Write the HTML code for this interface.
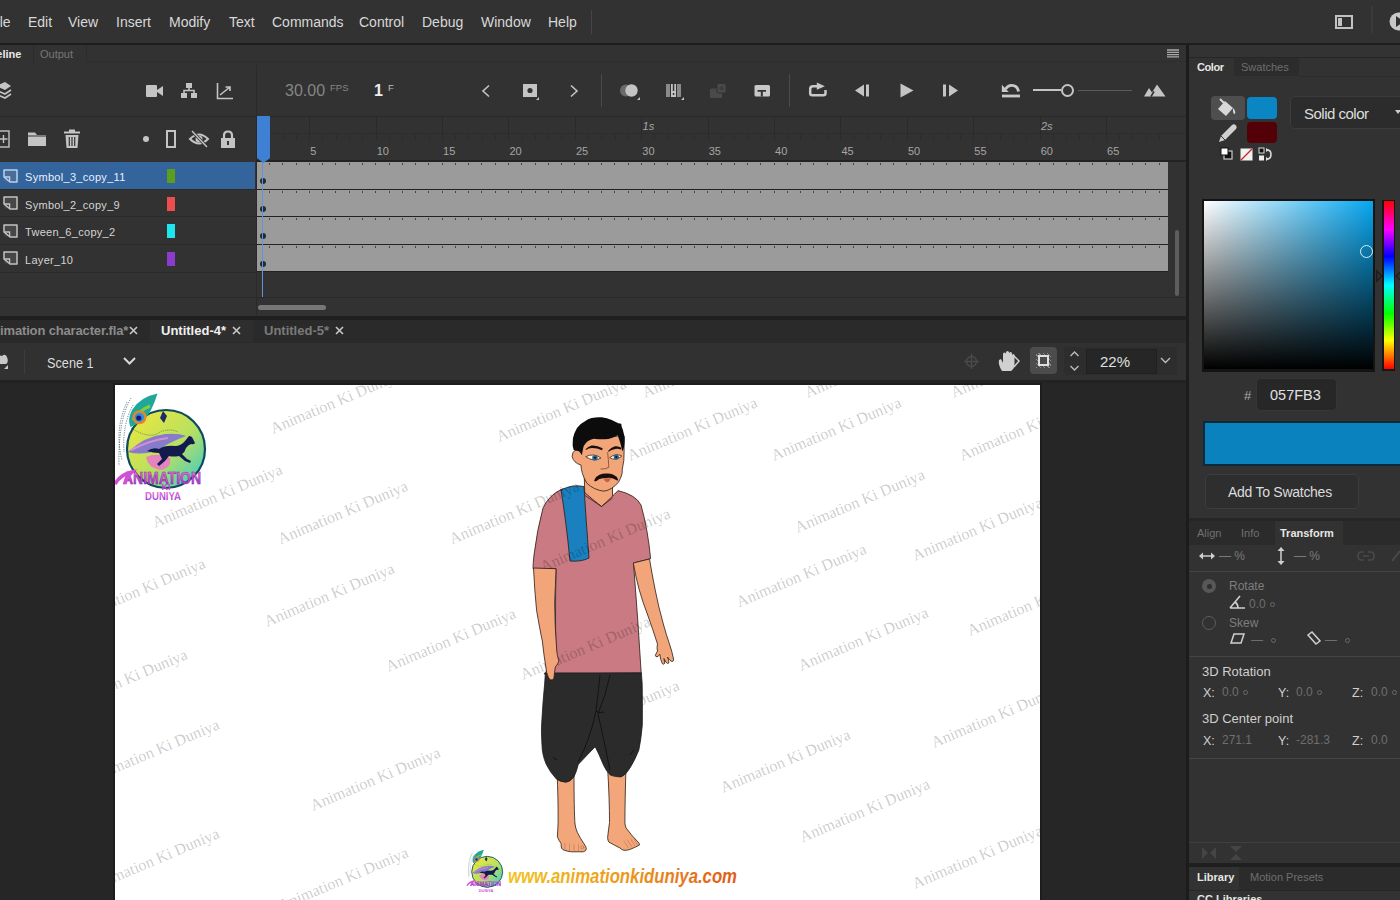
<!DOCTYPE html>
<html><head><meta charset="utf-8">
<style>
*{margin:0;padding:0;box-sizing:border-box}
html,body{width:1400px;height:900px;overflow:hidden;background:#262626;font-family:"Liberation Sans",sans-serif;position:relative}
.a{position:absolute}
.t{position:absolute;white-space:nowrap;line-height:1}
svg{position:absolute;overflow:visible}
#menu{left:0;top:0;width:1400px;height:43px;background:#323232}
#menu .t{top:15px;font-size:14px;color:#d8d8d8}
.ic{fill:#c4c4c4;stroke:none}
.ics{fill:none;stroke:#c4c4c4;stroke-width:1.6}
</style></head><body>
<!-- MENU -->
<div id="menu" class="a">
 <span class="t" style="left:-12px">File</span>
 <span class="t" style="left:28px">Edit</span>
 <span class="t" style="left:68px">View</span>
 <span class="t" style="left:116px">Insert</span>
 <span class="t" style="left:169px">Modify</span>
 <span class="t" style="left:229px">Text</span>
 <span class="t" style="left:272px">Commands</span>
 <span class="t" style="left:359px">Control</span>
 <span class="t" style="left:422px">Debug</span>
 <span class="t" style="left:481px">Window</span>
 <span class="t" style="left:548px">Help</span>
 <div class="a" style="left:591px;top:10px;width:1px;height:24px;background:#454545"></div>
 <div class="a" style="left:1335px;top:15px;width:18px;height:14px;border:2px solid #c2c2c2"></div>
 <div class="a" style="left:1338px;top:18px;width:3.5px;height:8px;background:#c2c2c2"></div>
 <div class="a" style="left:1370.5px;top:6px;width:2px;height:27px;background:#3a3a3a"></div>
 <svg style="left:1389px;top:12px" width="20" height="20" viewBox="0 0 20 20"><circle cx="9.5" cy="9.5" r="9" fill="#c8c8c8"/><path d="M7 4 L15 9.5 L7 15 Z" fill="#323232"/></svg>
</div>
<div class="a" style="left:0;top:43px;width:1400px;height:2px;background:#1e1e1e"></div>


<!-- TIMELINE PANEL -->
<div class="a" style="left:0;top:45px;width:1186px;height:272px;background:#323232"></div>
<span class="t" style="left:-23px;top:49px;font-size:11px;font-weight:bold;color:#e8e8e8">Timeline</span>
<div class="a" style="left:32.5px;top:45px;width:1px;height:18px;background:#2b2b2b"></div>
<span class="t" style="left:40px;top:49px;font-size:11px;color:#777777">Output</span>
<div class="a" style="left:86px;top:45px;width:1px;height:17px;background:#2c2c2c"></div>
<div class="a" style="left:86px;top:61px;width:1100px;height:1px;background:#2e2e2e"></div>

<!-- timeline toolbar -->
<svg style="left:0;top:80px" width="12" height="22" viewBox="0 0 12 22"><path class="ic" d="M-4 6 L5 2 L11 6 L5 10 Z"/><path class="ics" d="M-4 10 L5 14 L11 10 M-4 14 L5 18 L11 14" stroke-width="1.8"/></svg>
<svg style="left:145px;top:84px" width="20" height="14" viewBox="0 0 20 14"><rect class="ic" x="1" y="1" width="11" height="12" rx="1"/><path class="ic" d="M12 6 L18 2 L18 12 L12 8 Z"/></svg>
<svg style="left:180px;top:82px" width="18" height="17" viewBox="0 0 18 17"><rect class="ic" x="6" y="1" width="6" height="5"/><rect class="ic" x="1" y="11" width="6" height="5"/><rect class="ic" x="11" y="11" width="6" height="5"/><path class="ics" d="M9 6 V9 M4 11 V8.5 H14 V11" stroke-width="1.5"/></svg>
<svg style="left:216px;top:82px" width="18" height="18" viewBox="0 0 18 18"><path class="ics" d="M1.5 1 V16.5 H17" stroke-width="1.3"/><path class="ics" d="M4 13 L14 5 M9.5 5 H14 V9" stroke-width="1.5"/></svg>
<div class="a" style="left:256px;top:65px;width:1px;height:252px;background:#2a2a2a"></div>
<span class="t" style="left:285px;top:83px;font-size:16px;color:#858585">30.00</span>
<span class="t" style="left:330px;top:83px;font-size:9.5px;color:#858585">FPS</span>
<span class="t" style="left:374px;top:83px;font-size:16px;font-weight:bold;color:#eeeeee">1</span>
<span class="t" style="left:388px;top:83px;font-size:9.5px;color:#bdbdbd">F</span>
<svg style="left:480px;top:84px" width="12" height="14" viewBox="0 0 12 14"><path class="ics" d="M9 1.5 L3 7 L9 12.5" stroke-width="2"/></svg>
<svg style="left:522px;top:83px" width="18" height="17" viewBox="0 0 18 17"><rect class="ic" x="1" y="1" width="14" height="13"/><circle cx="8" cy="7.5" r="2.6" fill="#323232"/><path class="ic" d="M17 14 L17 17 L14 17 Z"/></svg>
<svg style="left:568px;top:84px" width="12" height="14" viewBox="0 0 12 14"><path class="ics" d="M3 1.5 L9 7 L3 12.5" stroke-width="2"/></svg>
<div class="a" style="left:601px;top:74px;width:1px;height:33px;background:#4a4a4a"></div>
<svg style="left:619px;top:83px" width="22" height="17" viewBox="0 0 22 17"><circle cx="7" cy="7.5" r="6" fill="#6a6a6a"/><circle cx="12.5" cy="7.5" r="6.2" fill="#c4c4c4"/><path class="ic" d="M21 14 L21 17 L18 17 Z"/></svg>
<svg style="left:665px;top:83px" width="20" height="17" viewBox="0 0 20 17"><rect x="1" y="1" width="4" height="13" fill="#8a8a8a"/><rect x="6" y="1" width="5" height="13" fill="#c4c4c4"/><rect x="12" y="1" width="4" height="13" fill="#8a8a8a"/><rect x="7.8" y="10" width="1.5" height="2" fill="#323232"/><rect x="7.8" y="1" width="1.5" height="7" fill="#323232"/><path class="ic" d="M19 14 L19 17 L16 17 Z"/></svg>
<svg style="left:709px;top:83px" width="20" height="17" viewBox="0 0 20 17"><rect x="1" y="5.5" width="12" height="9.5" rx="1.5" fill="#4a4a4a"/><rect x="8" y="0.5" width="9" height="9.5" rx="1.5" fill="#4a4a4a" stroke="#323232" stroke-width="1"/><circle cx="12.5" cy="5.2" r="2" fill="#3c3c3c"/></svg>
<svg style="left:754px;top:85px" width="17" height="12" viewBox="0 0 17 12"><rect x="0.5" y="0" width="15.5" height="11.5" rx="1.5" fill="#c8c8c8"/><path d="M3.5 5 H12 V6.8 H8.8 V11.5 H6.8 V6.8 H3.5 Z" fill="#323232"/></svg>
<div class="a" style="left:789px;top:74px;width:1px;height:33px;background:#4a4a4a"></div>
<svg style="left:800px;top:75px" width="30" height="25" viewBox="800 75 30 25"><path d="M818 86.2 H813 Q810.2 86.2 810.2 89 V93.3 Q810.2 95.3 812.2 95.3 H823.5 Q825.5 95.3 825.5 93.3 V90" fill="none" stroke="#c8c8c8" stroke-width="2.5"/><path d="M816.8 82.6 L824.9 86.2 L816.8 89.8 Z" fill="#c8c8c8"/></svg>
<svg style="left:854px;top:84px" width="18" height="13" viewBox="0 0 18 13"><path class="ic" d="M10 0.5 L1 6.5 L10 12.5 Z"/><rect class="ic" x="12" y="0.5" width="3" height="12"/></svg>
<svg style="left:899px;top:83px" width="16" height="15" viewBox="0 0 16 15"><path class="ic" d="M1.5 0.5 L14.5 7.5 L1.5 14.5 Z"/></svg>
<svg style="left:942px;top:84px" width="18" height="13" viewBox="0 0 18 13"><rect class="ic" x="1" y="0.5" width="3" height="12"/><path class="ic" d="M7 0.5 L16 6.5 L7 12.5 Z"/></svg>
<svg style="left:995px;top:75px" width="30" height="25" viewBox="995 75 30 25"><path d="M1005.5 89 Q1008 85.3 1011.5 85.3 Q1017.5 85.3 1018.5 91.5" fill="none" stroke="#c8c8c8" stroke-width="2.8"/><path d="M1001.8 84.8 L1001.8 92 L1008.8 92 Z" fill="#c8c8c8"/><rect x="1002" y="94.6" width="18" height="2.8" fill="#c8c8c8"/></svg>
<div class="a" style="left:1033px;top:89px;width:28px;height:2px;background:#c4c4c4"></div>
<svg style="left:1060px;top:83px" width="15" height="15" viewBox="0 0 15 15"><circle cx="7.5" cy="7.5" r="5.5" fill="none" stroke="#c4c4c4" stroke-width="2"/></svg>
<div class="a" style="left:1078px;top:89.5px;width:54px;height:1px;background:#5a5a5a"></div>
<svg style="left:1143px;top:84px" width="24" height="13" viewBox="0 0 24 13"><path class="ic" d="M1 12.5 L6 4 L9 8.5 L14 0.5 L22.5 12.5 Z"/><path d="M8 12.5 L11 7.5" stroke="#323232" stroke-width="1.6"/></svg>
<svg style="left:1167px;top:49px" width="13" height="10" viewBox="0 0 13 10"><path d="M0 1 H12 M0 3.3 H12 M0 5.6 H12 M0 7.9 H12" stroke="#aaaaaa" stroke-width="1.3"/></svg>

<div class="a" style="left:0;top:116px;width:1186px;height:1px;background:#282828"></div>
<!-- layer header icons -->
<svg style="left:-3px;top:130px" width="14" height="18" viewBox="0 0 14 18"><rect x="1" y="1" width="11" height="16" fill="none" stroke="#c4c4c4" stroke-width="1.4"/><path d="M6.5 5 V13 M2.5 9 H10.5" stroke="#c4c4c4" stroke-width="1.4"/></svg>
<svg style="left:27px;top:131px" width="20" height="16" viewBox="0 0 20 16"><path class="ic" d="M1 1.5 H8 L10 4 H19 V15 H1 Z"/><path d="M1 5 H19" stroke="#323232" stroke-width="1"/></svg>
<svg style="left:63px;top:129px" width="18" height="20" viewBox="0 0 18 20"><path class="ic" d="M6 0.5 H12 V2.5 H17 V4.5 H1 V2.5 H6 Z"/><path class="ic" d="M2.5 6 H15.5 L14.5 19 H3.5 Z"/><path d="M6.3 8 V17 M9 8 V17 M11.7 8 V17" stroke="#323232" stroke-width="1.2"/></svg>
<div class="a" style="left:143px;top:136px;width:6px;height:6px;border-radius:3px;background:#c4c4c4"></div>
<div class="a" style="left:166px;top:130px;width:10px;height:18px;border:2px solid #c4c4c4"></div>
<svg style="left:189px;top:129px" width="20" height="20" viewBox="0 0 20 20"><path d="M1 10 Q10 1 19 10 Q10 19 1 10 Z" fill="none" stroke="#c4c4c4" stroke-width="2"/><circle cx="10" cy="10" r="3.5" fill="#c4c4c4"/><path d="M3 2 L18 18" stroke="#323232" stroke-width="3"/><path d="M3 2 L18 18" stroke="#c4c4c4" stroke-width="1.4"/></svg>
<svg style="left:220px;top:130px" width="16" height="18" viewBox="0 0 16 18"><path d="M4 8 V5.5 Q4 1.5 8 1.5 Q12 1.5 12 5.5 V8" fill="none" stroke="#c4c4c4" stroke-width="2.2"/><rect class="ic" x="1" y="8" width="14" height="10"/><rect x="7" y="11" width="2" height="4" fill="#323232"/></svg>

<!-- ruler -->
<div class="a" style="left:256px;top:133px;width:930px;height:1px;background:#2c2c2c"></div>
<div class="a" style="left:256px;top:160px;width:930px;height:2px;background:#232323"></div>

<span class="t" style="left:310.3px;top:146px;font-size:11px;color:#a6a6a6">5</span>
<div class="a" style="left:309.1px;top:117px;width:1px;height:24px;background:#2a2a2a"></div>
<span class="t" style="left:376.7px;top:146px;font-size:11px;color:#a6a6a6">10</span>
<div class="a" style="left:375.5px;top:117px;width:1px;height:24px;background:#2a2a2a"></div>
<span class="t" style="left:443.1px;top:146px;font-size:11px;color:#a6a6a6">15</span>
<div class="a" style="left:441.9px;top:117px;width:1px;height:24px;background:#2a2a2a"></div>
<span class="t" style="left:509.5px;top:146px;font-size:11px;color:#a6a6a6">20</span>
<div class="a" style="left:508.3px;top:117px;width:1px;height:24px;background:#2a2a2a"></div>
<span class="t" style="left:575.9px;top:146px;font-size:11px;color:#a6a6a6">25</span>
<div class="a" style="left:574.7px;top:117px;width:1px;height:24px;background:#2a2a2a"></div>
<span class="t" style="left:642.3px;top:146px;font-size:11px;color:#a6a6a6">30</span>
<div class="a" style="left:641.1px;top:117px;width:1px;height:24px;background:#2a2a2a"></div>
<span class="t" style="left:708.7px;top:146px;font-size:11px;color:#a6a6a6">35</span>
<div class="a" style="left:707.5px;top:117px;width:1px;height:24px;background:#2a2a2a"></div>
<span class="t" style="left:775.1px;top:146px;font-size:11px;color:#a6a6a6">40</span>
<div class="a" style="left:773.9px;top:117px;width:1px;height:24px;background:#2a2a2a"></div>
<span class="t" style="left:841.5px;top:146px;font-size:11px;color:#a6a6a6">45</span>
<div class="a" style="left:840.3px;top:117px;width:1px;height:24px;background:#2a2a2a"></div>
<span class="t" style="left:907.9px;top:146px;font-size:11px;color:#a6a6a6">50</span>
<div class="a" style="left:906.7px;top:117px;width:1px;height:24px;background:#2a2a2a"></div>
<span class="t" style="left:974.3px;top:146px;font-size:11px;color:#a6a6a6">55</span>
<div class="a" style="left:973.1px;top:117px;width:1px;height:24px;background:#2a2a2a"></div>
<span class="t" style="left:1040.7px;top:146px;font-size:11px;color:#a6a6a6">60</span>
<div class="a" style="left:1039.5px;top:117px;width:1px;height:24px;background:#2a2a2a"></div>
<span class="t" style="left:1107.1px;top:146px;font-size:11px;color:#a6a6a6">65</span>
<div class="a" style="left:1105.9px;top:117px;width:1px;height:24px;background:#2a2a2a"></div>
<span class="t" style="left:642.6px;top:121px;font-size:11px;font-style:italic;color:#a6a6a6">1s</span>
<span class="t" style="left:1041.0px;top:121px;font-size:11px;font-style:italic;color:#a6a6a6">2s</span>
<div class="a" style="left:256px;top:134px;width:912px;height:6px;background-image:repeating-linear-gradient(90deg,#2c2c2c 0 1px,transparent 1px 13.28px);background-position:0 0"></div>
<div class="a" style="left:0;top:162.0px;width:255px;height:26.5px;background:#33649c"></div>
<svg style="left:3px;top:168.5px" width="15" height="14" viewBox="0 0 15 14"><rect x="1.5" y="1.5" width="12" height="11" fill="#4c6e96"/><path d="M1 8 V1 H14 V13 H7 Z" fill="none" stroke="#b8d4f0" stroke-width="1.5" stroke-linejoin="round"/><path d="M1.5 8 H6.6 V12.6" fill="none" stroke="#b8d4f0" stroke-width="1.3"/></svg>
<span class="t" style="left:25px;top:172.0px;font-size:11px;letter-spacing:0.3px;color:#e8f0fa">Symbol_3_copy_11</span>
<div class="a" style="left:167px;top:169.0px;width:8px;height:14px;background:#5e9c1c"></div>
<div class="a" style="left:257px;top:162.0px;width:911px;height:26.5px;background:#9b9b9b;background-image:repeating-linear-gradient(90deg,#444 0 1px,transparent 1px 13.28px);background-size:100% 2px;background-repeat:no-repeat;background-position:12px 1px"></div>
<div class="a" style="left:257px;top:188.5px;width:911px;height:1px;background:#222"></div>
<div class="a" style="left:259.5px;top:178.0px;width:6px;height:6px;border-radius:3px;background:#1d2b3a"></div>
<svg style="left:3px;top:196.0px" width="15" height="14" viewBox="0 0 15 14"><rect x="1.5" y="1.5" width="12" height="11" fill="#474747"/><path d="M1 8 V1 H14 V13 H7 Z" fill="none" stroke="#c4c4c4" stroke-width="1.5" stroke-linejoin="round"/><path d="M1.5 8 H6.6 V12.6" fill="none" stroke="#c4c4c4" stroke-width="1.3"/></svg>
<span class="t" style="left:25px;top:199.5px;font-size:11px;letter-spacing:0.3px;color:#d4d4d4">Symbol_2_copy_9</span>
<div class="a" style="left:167px;top:196.5px;width:8px;height:14px;background:#ec4d4d"></div>
<div class="a" style="left:0;top:188.5px;width:256px;height:1px;background:#2a2a2a"></div>
<div class="a" style="left:257px;top:189.5px;width:911px;height:26.5px;background:#9b9b9b;background-image:repeating-linear-gradient(90deg,#444 0 1px,transparent 1px 13.28px);background-size:100% 2px;background-repeat:no-repeat;background-position:12px 1px"></div>
<div class="a" style="left:257px;top:216.0px;width:911px;height:1px;background:#222"></div>
<div class="a" style="left:259.5px;top:205.5px;width:6px;height:6px;border-radius:3px;background:#1d2b3a"></div>
<svg style="left:3px;top:223.5px" width="15" height="14" viewBox="0 0 15 14"><rect x="1.5" y="1.5" width="12" height="11" fill="#474747"/><path d="M1 8 V1 H14 V13 H7 Z" fill="none" stroke="#c4c4c4" stroke-width="1.5" stroke-linejoin="round"/><path d="M1.5 8 H6.6 V12.6" fill="none" stroke="#c4c4c4" stroke-width="1.3"/></svg>
<span class="t" style="left:25px;top:227.0px;font-size:11px;letter-spacing:0.3px;color:#d4d4d4">Tween_6_copy_2</span>
<div class="a" style="left:167px;top:224.0px;width:8px;height:14px;background:#1ee6ee"></div>
<div class="a" style="left:0;top:216.0px;width:256px;height:1px;background:#2a2a2a"></div>
<div class="a" style="left:257px;top:217.0px;width:911px;height:26.5px;background:#9b9b9b;background-image:repeating-linear-gradient(90deg,#444 0 1px,transparent 1px 13.28px);background-size:100% 2px;background-repeat:no-repeat;background-position:12px 1px"></div>
<div class="a" style="left:257px;top:243.5px;width:911px;height:1px;background:#222"></div>
<div class="a" style="left:259.5px;top:233.0px;width:6px;height:6px;border-radius:3px;background:#1d2b3a"></div>
<svg style="left:3px;top:251.0px" width="15" height="14" viewBox="0 0 15 14"><rect x="1.5" y="1.5" width="12" height="11" fill="#474747"/><path d="M1 8 V1 H14 V13 H7 Z" fill="none" stroke="#c4c4c4" stroke-width="1.5" stroke-linejoin="round"/><path d="M1.5 8 H6.6 V12.6" fill="none" stroke="#c4c4c4" stroke-width="1.3"/></svg>
<span class="t" style="left:25px;top:254.5px;font-size:11px;letter-spacing:0.3px;color:#d4d4d4">Layer_10</span>
<div class="a" style="left:167px;top:251.5px;width:8px;height:14px;background:#8c3ccc"></div>
<div class="a" style="left:0;top:243.5px;width:256px;height:1px;background:#2a2a2a"></div>
<div class="a" style="left:257px;top:244.5px;width:911px;height:27.5px;background:#9b9b9b;background-image:repeating-linear-gradient(90deg,#444 0 1px,transparent 1px 13.28px);background-size:100% 2px;background-repeat:no-repeat;background-position:12px 1px"></div>
<div class="a" style="left:257px;top:271.0px;width:911px;height:1px;background:#222"></div>
<div class="a" style="left:259.5px;top:260.5px;width:6px;height:6px;border-radius:3px;background:#1d2b3a"></div>
<div class="a" style="left:0;top:272px;width:256px;height:1px;background:#2a2a2a"></div>
<div class="a" style="left:0;top:297px;width:1186px;height:1px;background:#2a2a2a"></div>
<!-- playhead -->
<div class="a" style="left:261.8px;top:158px;width:1.6px;height:139px;background:#5f95d6"></div>
<svg style="left:257px;top:116px" width="13" height="47" viewBox="0 0 13 47"><path d="M0 0 H13 V42 L6.5 47 L0 42 Z" fill="#3d80d4"/></svg>
<!-- scrollbars -->
<div class="a" style="left:258px;top:305px;width:68px;height:4.5px;border-radius:2.5px;background:#777777"></div>
<div class="a" style="left:1175px;top:230px;width:4px;height:66px;border-radius:2px;background:#5e5e5e"></div>
<!-- panel bottom -->
<div class="a" style="left:0;top:316px;width:1186px;height:4px;background:#1f1f1f"></div>

<!-- DOC TABS -->
<div class="a" style="left:0;top:320px;width:1186px;height:22px;background:#2a2a2a"></div>
<div class="a" style="left:150px;top:320px;width:103px;height:22px;background:#2e2e2e"></div>
<span class="t" style="left:-17px;top:324px;font-size:13px;font-weight:bold;color:#8c8c8c;letter-spacing:-0.15px">Animation character.fla*</span>
<svg style="left:129px;top:326px" width="9" height="9" viewBox="0 0 9 9"><path d="M1 1 L8 8 M8 1 L1 8" stroke="#c8c8c8" stroke-width="1.6"/></svg>
<span class="t" style="left:161px;top:324px;font-size:13px;font-weight:bold;color:#f0f0f0">Untitled-4*</span>
<svg style="left:232px;top:326px" width="9" height="9" viewBox="0 0 9 9"><path d="M1 1 L8 8 M8 1 L1 8" stroke="#c8c8c8" stroke-width="1.6"/></svg>
<span class="t" style="left:264px;top:324px;font-size:13px;font-weight:bold;color:#7a7a7a">Untitled-5*</span>
<svg style="left:335px;top:326px" width="9" height="9" viewBox="0 0 9 9"><path d="M1 1 L8 8 M8 1 L1 8" stroke="#c8c8c8" stroke-width="1.6"/></svg>
<!-- SCENE BAR -->
<div class="a" style="left:0;top:342px;width:1186px;height:38px;background:#313131"></div>
<div class="a" style="left:0;top:342px;width:1186px;height:1px;background:#2a2a2a"></div>
<svg style="left:-4px;top:352px" width="14" height="18" viewBox="0 0 14 18"><path d="M0 8 Q2 2 6 4 Q9 1 11 5 Q13 10 10 12 H0 Z" fill="#c8c8c8"/><path d="M8 17 L12 13 V17 Z" fill="#c8c8c8"/></svg>
<div class="a" style="left:24px;top:350px;width:1px;height:24px;background:#3c3c3c"></div>
<span class="t" style="left:47px;top:355px;font-size:15.5px;color:#dcdcdc;transform:scaleX(0.82);transform-origin:0 0">Scene 1</span>
<svg style="left:123px;top:357px" width="13" height="8" viewBox="0 0 13 8"><path d="M1 1 L6.5 6.5 L12 1" fill="none" stroke="#d8d8d8" stroke-width="2"/></svg>
<svg style="left:963px;top:353px" width="17" height="17" viewBox="0 0 17 17"><circle cx="8.5" cy="8.5" r="5" fill="none" stroke="#4a4a4a" stroke-width="1.5"/><path d="M8.5 1 V16 M1 8.5 H16" stroke="#4a4a4a" stroke-width="1.5"/></svg>
<svg style="left:997px;top:350px" width="23" height="22" viewBox="0 0 23 22"><path d="M5 21 Q1 15 2 10 L4 9 L6 13 V4 Q6 2.5 7.5 2.5 Q9 2.5 9 4 V9 V2.5 Q9 1 10.5 1 Q12 1 12 2.5 V9 V3.5 Q12 2 13.5 2 Q15 2 15 3.5 V9 V5.5 Q15 4 16.3 4 Q17.5 4 17.5 5.5 V14 Q17.5 19 14 21 Z" fill="#d0d0d0"/><path d="M16 5 L22 11 L17 17" fill="none" stroke="#d0d0d0" stroke-width="1.5"/></svg>
<div class="a" style="left:1030px;top:347px;width:27px;height:27px;border-radius:4px;background:#4c4c4c"></div>
<div class="a" style="left:1036px;top:353px;width:15px;height:15px;background:repeating-linear-gradient(45deg,#8a8a8a 0 1px,#4c4c4c 1px 3px)"></div>
<div class="a" style="left:1038px;top:355px;width:11px;height:11px;border:2px solid #e0e0e0;background:#4c4c4c"></div>
<div class="a" style="left:1064px;top:347px;width:113px;height:28px;border-radius:4px;background:#2d2d2d"></div>
<svg style="left:1069px;top:350px" width="11" height="22" viewBox="0 0 11 22"><path d="M1.5 6 L5.5 2 L9.5 6 M1.5 16 L5.5 20 L9.5 16" fill="none" stroke="#bdbdbd" stroke-width="1.4"/></svg>
<div class="a" style="left:1086px;top:349px;width:71px;height:25px;background:#262626;border:1px solid #202020"></div>
<span class="t" style="left:1100px;top:354px;font-size:15px;color:#e0e0e0">22%</span>
<svg style="left:1160px;top:357px" width="11" height="7" viewBox="0 0 11 7"><path d="M1 1 L5.5 5.5 L10 1" fill="none" stroke="#bdbdbd" stroke-width="1.4"/></svg>
<!-- STAGE AREA -->
<div class="a" style="left:0;top:380px;width:1186px;height:520px;background:#262626"></div>
<div class="a" style="left:0;top:380px;width:1186px;height:3px;background:#222222"></div>
<div class="a" style="left:113px;top:383px;width:929px;height:517px;background:#1c1c1c"></div>
<div id="stage" class="a" style="left:115px;top:385px;width:925px;height:515px;background:#ffffff;overflow:hidden"></div>

<svg style="left:115px;top:385px;overflow:hidden" width="925" height="515" viewBox="115 385 925 515">
<defs>
<linearGradient id="lg1" x1="0" y1="0" x2="1" y2="1"><stop offset="0" stop-color="#f4e83a"/><stop offset="0.55" stop-color="#b8e060"/><stop offset="1" stop-color="#2ec8d8"/></linearGradient>
<linearGradient id="lgt" x1="0" y1="0" x2="0" y2="1"><stop offset="0" stop-color="#f08ac8"/><stop offset="1" stop-color="#a030e0"/></linearGradient>
<linearGradient id="lgu" x1="0" y1="0" x2="1" y2="0"><stop offset="0" stop-color="#f2c41e"/><stop offset="0.5" stop-color="#eb9a1c"/><stop offset="1" stop-color="#e05a1a"/></linearGradient>
</defs>
<!-- character -->
<g stroke="#2a1a14" stroke-width="0.8" stroke-linejoin="round" stroke-linecap="round">
 <path d="M557 770 Q558.3 800 558.1 822.5 Q557.8 830 557.4 836.8 Q559 841 561.1 843.5 Q561 846 561.5 848 Q562.5 850 564.5 850.3 Q568 851.5 571.3 851.8 L583.3 851.8 Q586.5 851 586.3 848.8 Q586 846.5 584.8 845 Q580 838 577.3 832.3 Q575.5 828 575 824 Q574 812 574 770 Z" fill="#f3a67a"/><path d="M565 843 V849.5 M569.5 844 V851 M574 844.5 V851.2 M578.5 844.5 V851" stroke="#b06a48" stroke-width="0.5" fill="none"/><circle cx="582.3" cy="847.3" r="1.5" fill="none" stroke="#b06a48" stroke-width="0.5"/>
 <path d="M607.5 766 Q609.6 800 609.5 822.5 Q608.5 830 607.6 837.5 Q607.8 840.5 608.8 842 Q614 845 620 848 Q622 850 623.8 850.3 Q627 850.5 629.8 849.5 Q635 847.5 639.5 845 Q639.5 843 638 842 Q631 835 626 827.8 Q625 825 624.9 822.5 Q625 800 626 766 Z" fill="#f3a67a"/><path d="M624 841 L628.5 848 M627.5 840 L632 847 M631 839.5 L635 846 M634 839 L637.5 845" stroke="#b06a48" stroke-width="0.5" fill="none"/>
   <path d="M584.3 478 L585 500 L601.5 508 L612.5 501.6 L612.5 486 Z" fill="#f3a57a"/>
 <path d="M562 489 Q549 495 543 508 Q537 530 534 555 Q533 563 533 568.7 L556 568.7 Q555 620 556 660 L544 674 L641.2 673 Q638 620 633.5 563 Q642 561 650.6 558.6 Q648 530 641 505 Q636 495 618 490.6 Q612 497 601.5 506.5 Q592 499 584 492 Z" fill="#c97a82"/>
 <path d="M561 490 Q572 484 584 486.5 Q586 520 589 558 Q581 562 570 561 Q566 520 561 490 Z" fill="#1a80bf"/>
 <path d="M581.3 451 Q573 447 572.1 456.3 Q573.5 463 581 465 Q581 473 586.8 483.2 Q594 490 603.9 491.2 Q612 490 618.6 482 Q623 474 622.2 469.8 Q624.5 460 624.1 452 L624 436 L582 437 Z" fill="#f3a57a"/>
</g>
<path d="M573.7 450 Q572.2 446 572.7 443.3 Q572.8 440 573 438 Q574.5 432 577 428 Q580.5 423.5 585 421.3 Q588 419 591.7 418 Q596.5 417 601.7 417.3 Q607 418 611.7 420 Q615.5 421.8 618.3 423.3 Q620.5 423.5 621.3 424 L621.7 426.7 Q623 429.5 623.7 433.3 Q624.8 436.5 624.7 440 Q624.6 444 624 447.3 Q623.4 449.8 622.3 451.3 Q620.8 443 617.7 435.3 Q615 437 611.7 438 Q608 439.2 605 439.3 Q599 439.4 593.7 438.7 Q590.5 439.6 587.7 441.3 Q585.3 443.3 583.7 446 Q582.5 450.5 582 455.3 Q580.5 453 579 451.3 Q576.3 450.3 573.7 450 Z" fill="#0c0c0c"/>
<g fill="#1a0e0a">
 <path d="M585.5 449.2 Q588 446.6 591.7 445.6 Q597 445.2 602.6 448.2 L602.2 450.2 Q597 448.2 592 448.1 Q588.5 448.3 586 450 Z"/>
 <path d="M608 451 Q611 447.6 615 446.3 Q618.5 445.8 621.3 447.8 L621 449.6 Q618 448.5 615.2 449 Q611.5 449.8 608.6 451.8 Z"/>
 <path d="M594.2 480.2 Q595.5 476.5 599.5 474.8 Q603 473.4 606.3 473.6 Q609.8 473.3 613 474.6 Q616.8 476.2 618 479.4 Q618.4 481 616.6 480.2 Q613 477.9 609.5 477.8 Q606 478 603 478.2 Q599 478.4 596.5 481 Q594 481.8 594.2 480.2 Z"/>
</g>
<path d="M585.7 456.7 Q593.7 452.6 601 458 Q594 462.4 585.7 456.7 Z" fill="#fff" stroke="#5a3424" stroke-width="0.9"/>
<circle cx="595" cy="457.8" r="2.8" fill="#2a6a90"/>
<circle cx="595" cy="457.8" r="1.1" fill="#0a1a2a"/>
<path d="M609.7 457.7 Q615.7 452.6 621.7 456 Q616 461.5 609.7 457.7 Z" fill="#fff" stroke="#5a3424" stroke-width="0.9"/>
<circle cx="616.3" cy="457.1" r="2.7" fill="#2a6a90"/>
<circle cx="616.3" cy="457.1" r="1.1" fill="#0a1a2a"/>
<path d="M603.3 478.6 Q607.5 477.8 611.2 478.6 Q609 482.5 607 482.3 Q604.5 481.8 603.3 478.6 Z" fill="#c8604e"/>
<path d="M607.6 452 Q608.5 460 608.8 467.3 Q605 469.5 600.5 469" fill="none" stroke="#6a3a22" stroke-width="0.7"/>
<path d="M585 495.5 L601.5 506.5 L612.5 498" fill="none" stroke="#2a1a14" stroke-width="0.7"/>
<!-- logo top-left -->
<g>
 <circle cx="166" cy="449" r="39" fill="url(#lg1)" stroke="#0d4a5e" stroke-width="2.2"/>
 <g fill="none" stroke="#2a4a5a" stroke-width="0.7" stroke-dasharray="1.2 1.2">
  <path d="M131 398 Q118 420 119 466"/><path d="M127 402 Q114 430 122 460"/><path d="M133 405 Q122 425 124 452"/>
 </g>
 <path d="M157.5 393.5 Q140 397 132 410 Q127 420 130.5 427 Q145 422 151 410 Q155 402 157.5 393.5 Z" fill="#1fa89a"/>
 <path d="M150 406 Q140 410 133 420" stroke="#7ad040" stroke-width="3" fill="none"/>
 <circle cx="139.5" cy="417.3" r="7" fill="#e8862a"/>
 <circle cx="139.5" cy="417.3" r="4.6" fill="#2f8ee0"/>
 <circle cx="138.8" cy="418" r="2.6" fill="#101c7a"/>
 <path d="M131 428 Q150 440 160 432 Q170 428 178 432" fill="none" stroke="#2a4a5a" stroke-width="0.6" stroke-dasharray="1 1"/>
 <path d="M163 411 L167 416 L164 423 L160 418 Z" fill="#1a2a6a"/>
 <path d="M128 452 Q145 436 165 434 Q178 433 186 436 Q170 442 158 450 Q142 456 128 452 Z" fill="#7a6ae0" opacity="0.85"/>
 <path d="M131 450 Q150 440 168 438" stroke="#e090d0" stroke-width="2" fill="none" opacity="0.9"/>
 <path d="M146 457 Q158 452 170 458 Q172 468 160 470 Q148 468 146 457 Z" fill="#e87ac8" opacity="0.9"/>
 <path transform="translate(145 433)" d="M2 18 Q8 14 14 16 Q20 12 30 13 Q36 13 40 8 L44 3 Q47 3 48 6 L50 10 Q49 12 46 11 Q43 12 41 15 Q40 19 37 21 L42 26 L46 28 L45 30 L40 28 L34 23 Q28 24 24 23 L20 28 L14 33 L12 31 L17 26 Q15 22 14 20 Q8 20 2 18 Z" fill="#141a4e"/>
 <text x="162" y="483.5" font-family="Liberation Sans" font-weight="bold" font-size="16" text-anchor="middle" fill="url(#lgt)" stroke="#7a1aa0" stroke-width="0.5" textLength="78" lengthAdjust="spacingAndGlyphs">ANIMATION</text>
 <path d="M115 484 Q121 474 132 472 Q126 478 125 484" fill="none" stroke="#d050d8" stroke-width="3.5"/>
 <text x="166" y="490" font-family="Liberation Sans" font-weight="bold" font-size="9" text-anchor="middle" fill="#c040d0">KI</text>
 <text x="163" y="499.5" font-family="Liberation Sans" font-weight="bold" font-size="10.5" text-anchor="middle" fill="url(#lgt)" textLength="36" lengthAdjust="spacingAndGlyphs">DUNIYA</text>
</g>
<!-- bottom logo + url -->
<g>
<g transform="translate(421.3 693.6) scale(0.397)"><g>
 <circle cx="166" cy="449" r="39" fill="url(#lg1)" stroke="#0d4a5e" stroke-width="2.2"/>
 <g fill="none" stroke="#2a4a5a" stroke-width="0.7" stroke-dasharray="1.2 1.2">
  <path d="M131 398 Q118 420 119 466"/><path d="M127 402 Q114 430 122 460"/><path d="M133 405 Q122 425 124 452"/>
 </g>
 <path d="M157.5 393.5 Q140 397 132 410 Q127 420 130.5 427 Q145 422 151 410 Q155 402 157.5 393.5 Z" fill="#1fa89a"/>
 <path d="M150 406 Q140 410 133 420" stroke="#7ad040" stroke-width="3" fill="none"/>
 <circle cx="139.5" cy="417.3" r="7" fill="#e8862a"/>
 <circle cx="139.5" cy="417.3" r="4.6" fill="#2f8ee0"/>
 <circle cx="138.8" cy="418" r="2.6" fill="#101c7a"/>
 <path d="M131 428 Q150 440 160 432 Q170 428 178 432" fill="none" stroke="#2a4a5a" stroke-width="0.6" stroke-dasharray="1 1"/>
 <path d="M163 411 L167 416 L164 423 L160 418 Z" fill="#1a2a6a"/>
 <path d="M128 452 Q145 436 165 434 Q178 433 186 436 Q170 442 158 450 Q142 456 128 452 Z" fill="#7a6ae0" opacity="0.85"/>
 <path d="M131 450 Q150 440 168 438" stroke="#e090d0" stroke-width="2" fill="none" opacity="0.9"/>
 <path d="M146 457 Q158 452 170 458 Q172 468 160 470 Q148 468 146 457 Z" fill="#e87ac8" opacity="0.9"/>
 <path transform="translate(145 433)" d="M2 18 Q8 14 14 16 Q20 12 30 13 Q36 13 40 8 L44 3 Q47 3 48 6 L50 10 Q49 12 46 11 Q43 12 41 15 Q40 19 37 21 L42 26 L46 28 L45 30 L40 28 L34 23 Q28 24 24 23 L20 28 L14 33 L12 31 L17 26 Q15 22 14 20 Q8 20 2 18 Z" fill="#141a4e"/>
 <text x="162" y="483.5" font-family="Liberation Sans" font-weight="bold" font-size="16" text-anchor="middle" fill="url(#lgt)" stroke="#7a1aa0" stroke-width="0.5" textLength="78" lengthAdjust="spacingAndGlyphs">ANIMATION</text>
 <path d="M115 484 Q121 474 132 472 Q126 478 125 484" fill="none" stroke="#d050d8" stroke-width="3.5"/>
 <text x="166" y="490" font-family="Liberation Sans" font-weight="bold" font-size="9" text-anchor="middle" fill="#c040d0">KI</text>
 <text x="163" y="499.5" font-family="Liberation Sans" font-weight="bold" font-size="10.5" text-anchor="middle" fill="url(#lgt)" textLength="36" lengthAdjust="spacingAndGlyphs">DUNIYA</text>
</g></g>
 <text x="508" y="882.5" font-family="Liberation Sans" font-weight="bold" font-style="italic" font-size="20.5" fill="url(#lgu)" textLength="229" lengthAdjust="spacingAndGlyphs">www.animationkiduniya.com</text>
</g>
<!-- watermarks -->
<g font-family="Liberation Serif" font-size="16" fill="#000" fill-opacity="0.21">
<text x="273" y="434" transform="rotate(-23 273 434)">Animation Ki Duniya</text>
<text x="499" y="442" transform="rotate(-23 499 442)">Animation Ki Duniya</text>
<text x="630" y="461" transform="rotate(-23 630 461)">Animation Ki Duniya</text>
<text x="774" y="461" transform="rotate(-23 774 461)">Animation Ki Duniya</text>
<text x="962" y="461" transform="rotate(-23 962 461)">Animation Ki Duniya</text>
<text x="155" y="528" transform="rotate(-23 155 528)">Animation Ki Duniya</text>
<text x="280.5" y="544.5" transform="rotate(-23 280.5 544.5)">Animation Ki Duniya</text>
<text x="452" y="544.5" transform="rotate(-23 452 544.5)">Animation Ki Duniya</text>
<text x="797.5" y="533" transform="rotate(-23 797.5 533)">Animation Ki Duniya</text>
<text x="915" y="561" transform="rotate(-23 915 561)">Animation Ki Duniya</text>
<text x="543" y="572" transform="rotate(-23 543 572)">Animation Ki Duniya</text>
<text x="78" y="622" transform="rotate(-23 78 622)">Animation Ki Duniya</text>
<text x="267" y="627" transform="rotate(-23 267 627)">Animation Ki Duniya</text>
<text x="739" y="607.5" transform="rotate(-23 739 607.5)">Animation Ki Duniya</text>
<text x="801" y="671" transform="rotate(-23 801 671)">Animation Ki Duniya</text>
<text x="970" y="636" transform="rotate(-23 970 636)">Animation Ki Duniya</text>
<text x="523" y="680" transform="rotate(-23 523 680)">Animation Ki Duniya</text>
<text x="388.6" y="672" transform="rotate(-23 388.6 672)">Animation Ki Duniya</text>
<text x="60" y="713" transform="rotate(-23 60 713)">Animation Ki Duniya</text>
<text x="92" y="783" transform="rotate(-23 92 783)">Animation Ki Duniya</text>
<text x="313" y="811" transform="rotate(-23 313 811)">Animation Ki Duniya</text>
<text x="92" y="892" transform="rotate(-23 92 892)">Animation Ki Duniya</text>
<text x="281" y="911" transform="rotate(-23 281 911)">Animation Ki Duniya</text>
<text x="934" y="748" transform="rotate(-23 934 748)">Animation Ki Duniya</text>
<text x="723" y="793" transform="rotate(-23 723 793)">Animation Ki Duniya</text>
<text x="802.5" y="842.5" transform="rotate(-23 802.5 842.5)">Animation Ki Duniya</text>
<text x="915" y="889" transform="rotate(-23 915 889)">Animation Ki Duniya</text>
<text x="552" y="744" transform="rotate(-23 552 744)">Animation Ki Duniya</text>
<text x="645" y="398" transform="rotate(-23 645 398)">Animation Ki Duniya</text>
<text x="807.5" y="398" transform="rotate(-23 807.5 398)">Animation Ki Duniya</text>
<text x="953.6" y="398" transform="rotate(-23 953.6 398)">Animation Ki Duniya</text>
</g>
<!-- PANTS -->
<g stroke="#1a1a1a" stroke-width="0.8" stroke-linejoin="round">
 <path d="M545.4 672.9 L641.4 672.9 Q642.5 685 642.3 693.3 Q642.5 710 642.3 725.3 Q641 740 638.8 750.2 Q634 762 629.9 768 Q626 775 621 776.9 Q615 777 610.3 775.1 Q606 771 603.2 764.4 Q599 754 595.2 746.7 Q588 754 578.3 764.4 Q576 773 573.9 776.9 Q570 782 565.9 782.2 Q560 782 556.1 778.7 Q550 772 546.3 764.4 Q542 755 541.9 743.1 Q541 730 541.9 720 Q543 700 544.6 684.4 Z" fill="#2b2b2b"/>
</g>
<g fill="none" stroke="#0e0e0e" stroke-width="0.8">
 <path d="M600 675 Q598 695 596 711 Q590 740 578 762"/>
 <path d="M610 675 Q606 695 598 714 Q604 740 610 770"/>
 <path d="M596 711 Q600 714 604 712"/>
 <path d="M553 757 L557 760 M630 755 L634 750"/>
</g>
<g stroke="#2a1a14" stroke-width="0.8" stroke-linejoin="round">
<path d="M533.5 568 Q534.5 590 536.6 610.5 Q540 630 542.3 641 Q543.8 655 546.7 672.6 Q548 678 550.3 680 Q553 680 553.9 678.4 Q554.5 672 555.3 667 Q558 664 558.9 661 Q557 655 556.8 651 Q555 630 554.6 603 Q555.5 585 556 568.7 Z" fill="#f3a57a"/>
<path d="M633.3 563 Q636 578 639 589 Q643 603 647.7 615 Q653 630 657.5 644 Q656.5 648 657.5 651 L655.3 655.3 Q655.5 657.5 658 656.5 L659.8 654.2 Q660.3 659.5 662.3 663.6 Q664 665 664.8 663.2 L663.9 658.5 Q666 663 667.6 663.6 Q669.2 663.8 668.8 661.2 L667.6 657.2 Q670 661 672 661.6 Q674 661.3 673.5 659 Q672 651 669.4 643.8 Q666 634 663.6 625 Q658 605 655 589 Q652 574 649.5 559 Z" fill="#f3a57a"/>
</g>
<!-- /PANTS -->
</svg>

<!-- RIGHT PANEL -->
<div class="a" style="left:1186px;top:45px;width:3px;height:855px;background:#1c1c1c"></div>
<div class="a" style="left:1189px;top:45px;width:211px;height:855px;background:#323232"></div>
<div class="a" style="left:1189px;top:45px;width:211px;height:12px;background:#333333"></div>
<div class="a" style="left:1189px;top:56.5px;width:211px;height:1.5px;background:#262626"></div>
<div class="a" style="left:1234px;top:58px;width:65px;height:18px;background:#2c2c2c"></div>
<div class="a" style="left:1299px;top:76px;width:101px;height:1px;background:#2c2c2c"></div>
<span class="t" style="left:1197px;top:62px;font-size:11px;font-weight:bold;letter-spacing:-0.4px;color:#e6e6e6">Color</span>
<span class="t" style="left:1241px;top:62px;font-size:11px;color:#6e6e6e">Swatches</span>
<div class="a" style="left:1211px;top:96px;width:34px;height:24px;border-radius:4px;background:#4e4e4e"></div>
<svg style="left:1216px;top:98px" width="22" height="20" viewBox="0 0 22 20"><path d="M4 1 L9 6" stroke="#d8d8d8" stroke-width="2"/><path d="M9 3 L17 10 L10 18 L2 11 Z" fill="#d8d8d8"/><path d="M17 10 Q20 13 19 16 Q17 16 17 13 Z" fill="#d8d8d8"/></svg>
<div class="a" style="left:1247px;top:97px;width:30px;height:22px;border-radius:4px;background:#0a86c4"></div>
<svg style="left:1218px;top:123px" width="21" height="20" viewBox="0 0 21 20"><path d="M1 19 L3 13 L14 2 Q16 0.5 18 2.5 Q19.5 4.5 18 6 L7 17 Z" fill="#cfcfcf"/><path d="M3 13 L7 17" stroke="#323232" stroke-width="1"/></svg>
<div class="a" style="left:1247px;top:122px;width:30px;height:21px;border-radius:4px;background:#540008"></div>
<svg style="left:1220px;top:147px" width="14" height="14" viewBox="0 0 14 14"><rect x="4" y="4" width="8" height="8" fill="#111" stroke="#ccc" stroke-width="1.2"/><rect x="1" y="1" width="7" height="7" fill="#fff" stroke="#111" stroke-width="1"/></svg>
<svg style="left:1240px;top:148px" width="13" height="13" viewBox="0 0 13 13"><rect x="0.5" y="0.5" width="12" height="12" fill="#f2f2f2"/><path d="M1 12 L12 1" stroke="#d02020" stroke-width="1.2"/></svg>
<svg style="left:1258px;top:147px" width="15" height="15" viewBox="0 0 15 15"><rect x="1" y="1" width="5" height="5" fill="#111" stroke="#ddd" stroke-width="1"/><rect x="1" y="8.5" width="5" height="5" fill="#eee"/><path d="M9 3 Q13 3 13 7.5 Q13 12 9 12" fill="none" stroke="#ddd" stroke-width="1.6"/><path d="M8 1 L11 3 L8 5 Z M8 10 L11 12 L8 14 Z" fill="#ddd"/></svg>
<div class="a" style="left:1290px;top:96px;width:130px;height:33px;border-radius:5px;background:#2c2c2c;border:1px solid #3c3c3c"></div>
<span class="t" style="left:1304px;top:106px;font-size:15px;letter-spacing:-0.5px;color:#dedede">Solid color</span>
<svg style="left:1395px;top:110px" width="6" height="4" viewBox="0 0 6 4"><path d="M0 0 H6 L3 4 Z" fill="#ccc"/></svg>
<!-- gradient square -->
<div class="a" style="left:1202px;top:199px;width:173px;height:173px;background:#141414"></div>
<div class="a" style="left:1204px;top:201px;width:169px;height:168px;background:linear-gradient(to bottom,rgba(0,0,0,0),#000),linear-gradient(to right,#fff,#06a6f0)"></div>
<div class="a" style="left:1359.5px;top:244.5px;width:13px;height:13px;border-radius:7px;border:1.5px solid #d8eef8"></div>
<div class="a" style="left:1382px;top:199.5px;width:13px;height:171px;background:#161616"></div>
<div class="a" style="left:1383.5px;top:201px;width:10px;height:168px;background:linear-gradient(to bottom,#f00,#f0f 17%,#00f 33%,#0ff 50%,#0f0 67%,#ff0 83%,#f00)"></div>
<svg style="left:1376px;top:270px" width="7" height="12" viewBox="0 0 7 12"><path d="M0.7 1 L6 6 L0.7 11 Z" fill="none" stroke="#1a1a1a" stroke-width="1.2"/></svg><svg style="left:1395px;top:270px" width="7" height="12" viewBox="0 0 7 12"><path d="M6.3 1 L1 6 L6.3 11 Z" fill="none" stroke="#1a1a1a" stroke-width="1.2"/></svg>
<span class="t" style="left:1244px;top:389px;font-size:13px;color:#aaaaaa">#</span>
<div class="a" style="left:1256px;top:378px;width:81px;height:33px;border-radius:5px;background:#272727;border:1px solid #363636"></div>
<span class="t" style="left:1270px;top:388px;font-size:14.5px;color:#e0e0e0">057FB3</span>
<div class="a" style="left:1203px;top:421px;width:200px;height:45px;background:#0e2a3a"></div>
<div class="a" style="left:1205px;top:423px;width:200px;height:41px;background:#0a82be"></div>
<div class="a" style="left:1205px;top:474px;width:154px;height:35px;border-radius:5px;background:#2e2e2e;border:1px solid #3d3d3d"></div>
<span class="t" style="left:1228px;top:485px;font-size:14px;letter-spacing:-0.27px;color:#dcdcdc">Add To Swatches</span>
<!-- Transform panel -->
<div class="a" style="left:1189px;top:518px;width:211px;height:3px;background:#262626"></div>
<div class="a" style="left:1189px;top:521px;width:211px;height:24px;background:#2b2b2b"></div>
<div class="a" style="left:1275px;top:521px;width:68px;height:24px;background:#323232"></div>
<span class="t" style="left:1197px;top:528px;font-size:11px;color:#707070">Align</span>
<span class="t" style="left:1241px;top:528px;font-size:11px;color:#707070">Info</span>
<span class="t" style="left:1280px;top:528px;font-size:11px;font-weight:bold;color:#e6e6e6">Transform</span>
<svg style="left:1199px;top:551px" width="16" height="10" viewBox="0 0 16 10"><path d="M2 5 H14" stroke="#cfcfcf" stroke-width="1.5"/><path d="M0 5 L4 1.5 V8.5 Z M16 5 L12 1.5 V8.5 Z" fill="#cfcfcf"/></svg>
<span class="t" style="left:1219px;top:550px;font-size:12px;color:#7a7a7a">— %</span>
<svg style="left:1276px;top:547px" width="10" height="18" viewBox="0 0 10 18"><path d="M5 2 V16" stroke="#cfcfcf" stroke-width="1.5"/><path d="M5 0 L1.5 4 H8.5 Z M5 18 L1.5 14 H8.5 Z" fill="#cfcfcf"/></svg>
<span class="t" style="left:1294px;top:550px;font-size:12px;color:#7a7a7a">— %</span>
<svg style="left:1357px;top:550px" width="18" height="12" viewBox="0 0 18 12"><path d="M7 2 H4 Q1 2 1 6 Q1 10 4 10 H7 M11 2 H14 Q17 2 17 6 Q17 10 14 10 H11 M6 6 H12" fill="none" stroke="#4a4a4a" stroke-width="1.6"/></svg>
<svg style="left:1390px;top:549px" width="12" height="14" viewBox="0 0 12 14"><path d="M2 12 L10 2" stroke="#4a4a4a" stroke-width="2"/></svg>
<div class="a" style="left:1189px;top:571px;width:211px;height:1px;background:#444"></div>
<div class="a" style="left:1202px;top:579px;width:14px;height:14px;border-radius:7px;background:#575757"></div>
<div class="a" style="left:1206.5px;top:583.5px;width:5px;height:5px;border-radius:3px;background:#2f2f2f"></div>
<span class="t" style="left:1229px;top:580px;font-size:12px;color:#7d7d7d">Rotate</span>
<svg style="left:1229px;top:595px" width="17" height="14" viewBox="0 0 17 14"><path d="M1 13 H16 M1 13 L11 1 M6 7 Q9 9 9 13" fill="none" stroke="#cfcfcf" stroke-width="1.6"/></svg>
<span class="t" style="left:1249px;top:598px;font-size:12px;color:#6e6e6e">0.0<i style="display:inline-block;width:5px;height:5px;border:1px solid #6a6a6a;border-radius:50%;margin-left:4px;vertical-align:1px"></i></span>
<div class="a" style="left:1202px;top:616px;width:14px;height:14px;border-radius:7px;border:1.5px solid #5c5c5c"></div>
<span class="t" style="left:1229px;top:617px;font-size:12px;color:#7d7d7d">Skew</span>
<svg style="left:1230px;top:633px" width="15" height="11" viewBox="0 0 15 11"><path d="M4 1 H14 L11 10 H1 Z" fill="none" stroke="#cfcfcf" stroke-width="1.5"/></svg>
<span class="t" style="left:1251px;top:634px;font-size:12px;color:#6e6e6e">—<i style="display:inline-block;width:5px;height:5px;border:1px solid #6a6a6a;border-radius:50%;margin-left:8px;vertical-align:1px"></i></span>
<svg style="left:1307px;top:631px" width="14" height="15" viewBox="0 0 14 15"><path d="M1 4 L5 1 L13 10 L9 13 Z" fill="none" stroke="#cfcfcf" stroke-width="1.5"/></svg>
<span class="t" style="left:1325px;top:634px;font-size:12px;color:#6e6e6e">—<i style="display:inline-block;width:5px;height:5px;border:1px solid #6a6a6a;border-radius:50%;margin-left:8px;vertical-align:1px"></i></span>
<div class="a" style="left:1189px;top:656px;width:211px;height:1px;background:#444"></div>
<span class="t" style="left:1202px;top:665px;font-size:13px;color:#cfcfcf">3D Rotation</span>
<span class="t" style="left:1203px;top:687px;font-size:12.5px;color:#cfcfcf">X:</span>
<span class="t" style="left:1222px;top:686px;font-size:12px;color:#6e6e6e">0.0<i style="display:inline-block;width:5px;height:5px;border:1px solid #6a6a6a;border-radius:50%;margin-left:4px;vertical-align:1px"></i></span>
<span class="t" style="left:1278px;top:687px;font-size:12.5px;color:#cfcfcf">Y:</span>
<span class="t" style="left:1296px;top:686px;font-size:12px;color:#6e6e6e">0.0<i style="display:inline-block;width:5px;height:5px;border:1px solid #6a6a6a;border-radius:50%;margin-left:4px;vertical-align:1px"></i></span>
<span class="t" style="left:1352px;top:687px;font-size:12.5px;color:#cfcfcf">Z:</span>
<span class="t" style="left:1371px;top:686px;font-size:12px;color:#6e6e6e">0.0<i style="display:inline-block;width:5px;height:5px;border:1px solid #6a6a6a;border-radius:50%;margin-left:4px;vertical-align:1px"></i></span>
<span class="t" style="left:1202px;top:712px;font-size:13px;color:#cfcfcf">3D Center point</span>
<span class="t" style="left:1203px;top:735px;font-size:12.5px;color:#cfcfcf">X:</span>
<span class="t" style="left:1222px;top:734px;font-size:12px;color:#6e6e6e">271.1</span>
<span class="t" style="left:1278px;top:735px;font-size:12.5px;color:#cfcfcf">Y:</span>
<span class="t" style="left:1296px;top:734px;font-size:12px;color:#6e6e6e">-281.3</span>
<span class="t" style="left:1352px;top:735px;font-size:12.5px;color:#cfcfcf">Z:</span>
<span class="t" style="left:1371px;top:734px;font-size:12px;color:#6e6e6e">0.0</span>
<div class="a" style="left:1189px;top:758px;width:211px;height:1px;background:#454545"></div>
<div class="a" style="left:1189px;top:842px;width:211px;height:1px;background:#3e3e3e"></div>
<svg style="left:1201px;top:846px" width="16" height="14" viewBox="0 0 16 14"><path d="M1 1 L7 7 L1 13 Z M15 1 L9 7 L15 13 Z" fill="#454545"/></svg>
<svg style="left:1229px;top:845px" width="14" height="16" viewBox="0 0 14 16"><path d="M1 1 H13 L7 7 Z M1 15 H13 L7 9 Z" fill="#454545"/></svg>
<div class="a" style="left:1189px;top:863px;width:211px;height:4px;background:#1f1f1f"></div>
<div class="a" style="left:1189px;top:867px;width:211px;height:23px;background:#2b2b2b"></div>
<div class="a" style="left:1189px;top:867px;width:50px;height:23px;background:#323232"></div>
<span class="t" style="left:1197px;top:872px;font-size:11px;font-weight:bold;color:#e6e6e6">Library</span>
<span class="t" style="left:1250px;top:872px;font-size:11px;color:#6e6e6e">Motion Presets</span>
<div class="a" style="left:1189px;top:890px;width:211px;height:1px;background:#262626"></div>
<span class="t" style="left:1197px;top:894px;font-size:11px;font-weight:bold;color:#e6e6e6">CC Libraries</span>

</body></html>
